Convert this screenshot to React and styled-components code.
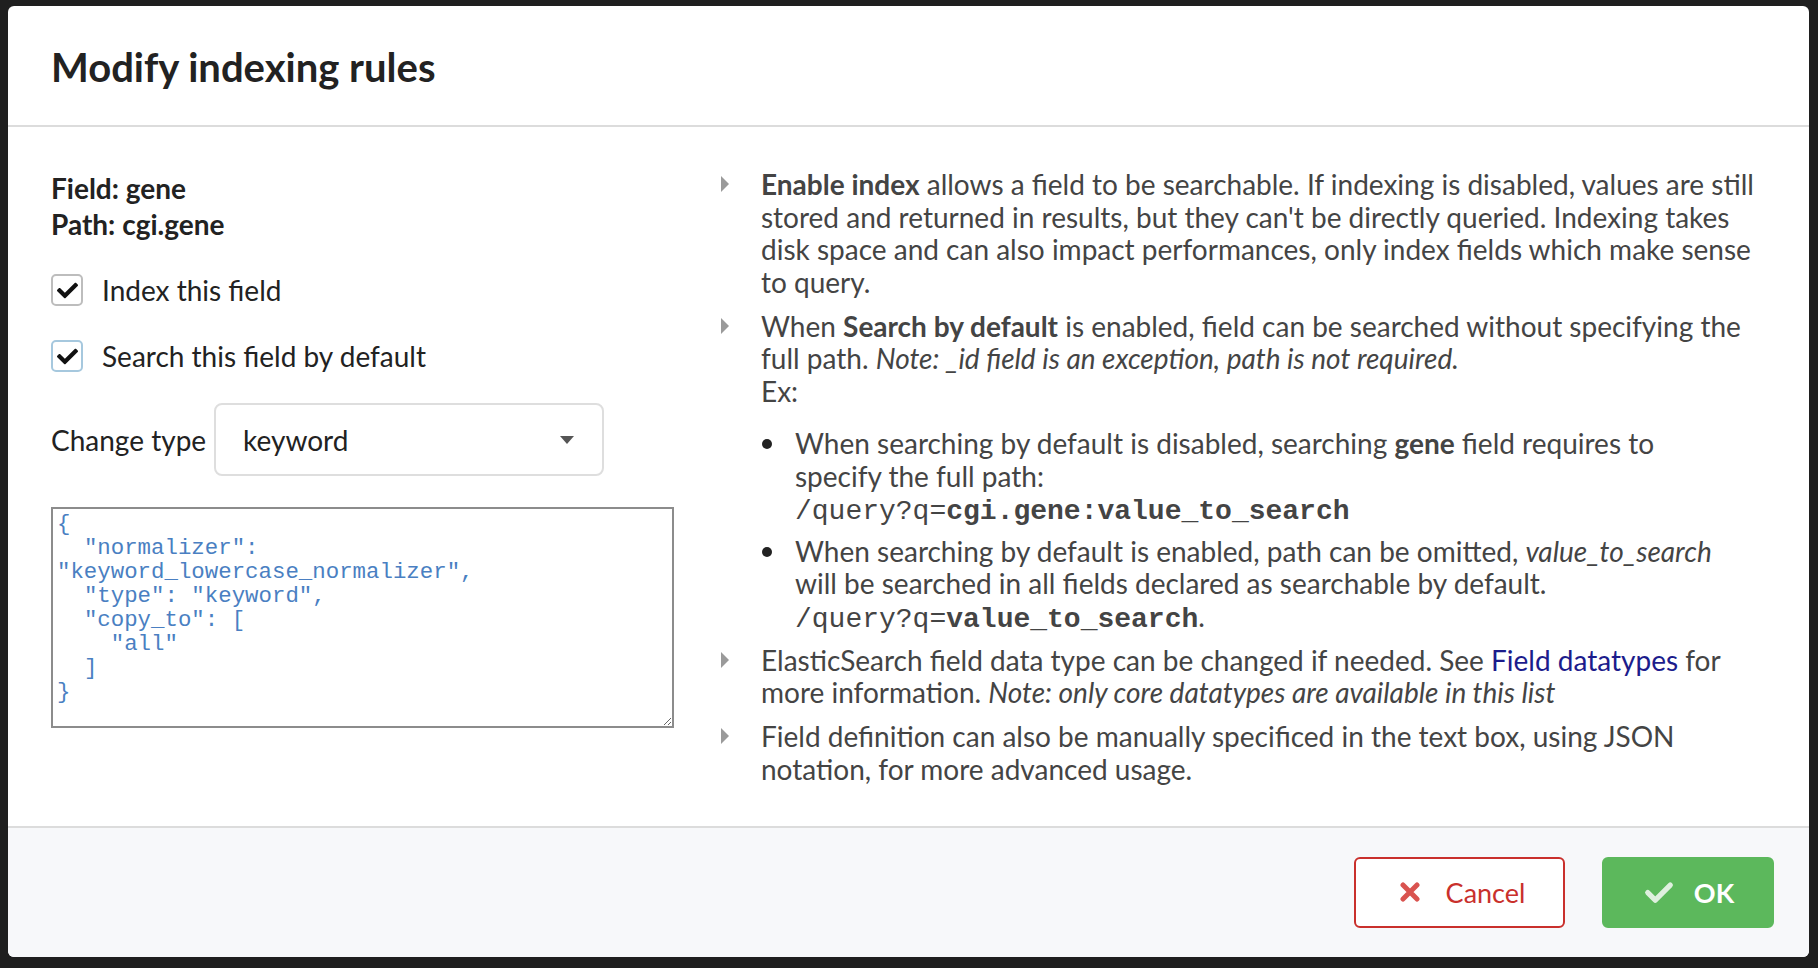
import React from 'react'
import styled, { createGlobalStyle } from 'styled-components'
import { FaCheck } from 'react-icons/fa'

const GlobalStyle = createGlobalStyle`
   html, body {
      margin: 0;
      padding: 0;
      background: #1f1f1f;
      font-family: Lato, "Open Sans", sans-serif;
   }
`

const Backdrop = styled.div`
   width: 1818px;
   height: 968px;
   padding: 6px 0 0 8px;
   box-sizing: border-box;
`

const Modal = styled.div`
   width: 1801px;
   height: 951px;
   background: #fff;
   border-radius: 6px;
   display: flex;
   flex-direction: column;
   overflow: hidden;
`

const Header = styled.div`
   height: 119px;
   flex-shrink: 0;
   display: flex;
   align-items: center;
   padding: 0 43px;
   border-bottom: 2px solid #dcdcdc;
`

const Title = styled.h1`
   margin: 0;
   font-size: 40px;
   font-weight: 700;
   color: #222;
   padding-top: 2px;
`

const Body = styled.div`
   flex: 1;
   display: grid;
   grid-template-columns: 623px 1fr;
   column-gap: 46px;
   padding: 41px 46px 0 43px;
`

const LeftCol = styled.div`
   display: flex;
   flex-direction: column;
   color: #222;
   font-size: 28px;
`

const Info = styled.div`
   font-weight: 700;
   line-height: 36px;
   margin-top: 2px;
`

const CheckRow = styled.label`
   display: flex;
   align-items: center;
   gap: 19px;
   margin-top: ${p => p.first ? '32px' : '34px'};
   line-height: 32px;
`

const Box = styled.span`
   width: 28px;
   height: 28px;
   border: 2px solid ${p => p.focused ? '#a6c8de' : '#bdbdbd'};
   border-radius: 5px;
   display: flex;
   align-items: center;
   justify-content: center;
   background: #fff;
   color: #111;
   font-size: 21px;
`

const TypeRow = styled.div`
   display: flex;
   align-items: center;
   gap: 8px;
   margin-top: 31px;
`

const Select = styled.div`
   width: 390px;
   height: 73px;
   box-sizing: border-box;
   border: 2px solid #dedede;
   border-radius: 8px;
   display: flex;
   align-items: center;
   justify-content: space-between;
   padding: 0 28px 0 27px;
`

const JsonArea = styled.textarea`
   margin-top: 31px;
   width: 623px;
   height: 221px;
   box-sizing: border-box;
   border: 2px solid #8c8c8c;
   padding: 3px 4px;
   font-family: "Liberation Mono", "Courier New", monospace;
   font-size: 22.4px;
   line-height: 24px;
   color: #4a7fc2;
   resize: vertical;
   outline: none;
`

const HelpList = styled.ul`
   list-style: none;
   margin: 0;
   padding: 0;
   color: #444;
   font-size: 28px;
   line-height: 32.5px;
`

const HelpItem = styled.li`
   display: flex;
   gap: 31px;
   margin-bottom: 11.5px;
`

const Caret = styled.span`
   flex-shrink: 0;
   width: 10px;
   height: 32.5px;
   display: flex;
   align-items: center;
`

const SubList = styled.ul`
   margin: 20px 0 0 0;
   padding: 0 32px 0 0;
   list-style: none;
   display: flex;
   flex-direction: column;
   gap: 10px;
`

const SubItem = styled.li`
   display: flex;
   gap: 23px;
`

const Dot = styled.span`
   flex-shrink: 0;
   width: 10px;
   height: 10px;
   border-radius: 50%;
   background: #222;
   margin: 12px 0 0 1px;
`

const Code = styled.code`
   font-family: "Liberation Mono", "Courier New", monospace;
   font-size: 28px;
   line-height: 20px;
   color: #444;
`

const Link = styled.a`
   color: #1c1c8c;
   text-decoration: none;
`

const Footer = styled.div`
   height: 128px;
   flex-shrink: 0;
   background: #f7f8fa;
   border-top: 2px solid #dcdcdc;
   display: flex;
   align-items: center;
   justify-content: flex-end;
   gap: 37px;
   padding: 0 35px 1px 0;
`

const Button = styled.button`
   height: 71px;
   width: ${p => p.w}px;
   border-radius: 6px;
   border: 2px solid ${p => p.primary ? '#5cb85c' : '#c9302c'};
   background: ${p => p.primary ? '#5cb85c' : '#fff'};
   color: ${p => p.primary ? '#fff' : '#c9302c'};
   font-family: Lato, sans-serif;
   font-size: 27px;
   font-weight: ${p => p.primary ? 700 : 400};
   display: flex;
   align-items: center;
   justify-content: center;
   gap: ${p => p.primary ? '20px' : '26px'};
   padding-right: ${p => p.primary ? '4px' : '0'};
   cursor: pointer;
`

const CaretIcon = () => (
   <svg width="10" height="16" viewBox="0 0 10 16">
      <path d="M1 0 L9 8 L1 16 Z" fill="#9a9a9a" />
   </svg>
)

const CheckMark = ({ color = '#111', size = 22 }) => (
   <svg width={size} height={size} viewBox="0 0 24 24">
      <path d="M3 12.5 L9 18.5 L21 6.5" fill="none" stroke={color} strokeWidth="4.2" strokeLinecap="round" strokeLinejoin="round" />
   </svg>
)

const App = () => {
   const json = `{
  "normalizer": "keyword_lowercase_normalizer",
  "type": "keyword",
  "copy_to": [
    "all"
  ]
}`
   return (
      <Backdrop>
         <GlobalStyle />
         <Modal>
            <Header>
               <Title>Modify indexing rules</Title>
            </Header>
            <Body>
               <LeftCol>
                  <Info>Field: gene<br />Path: cgi.gene</Info>
                  <CheckRow first>
                     <Box><FaCheck /></Box>
                     Index this field
                  </CheckRow>
                  <CheckRow>
                     <Box focused><FaCheck /></Box>
                     Search this field by default
                  </CheckRow>
                  <TypeRow>
                     <span>Change type</span>
                     <Select>
                        <span>keyword</span>
                        <svg width="14" height="8" viewBox="0 0 14 8">
                           <path d="M0 0 H14 L7 8 Z" fill="#555" />
                        </svg>
                     </Select>
                  </TypeRow>
                  <JsonArea defaultValue={json} spellCheck={false} />
               </LeftCol>
               <HelpList>
                  <HelpItem>
                     <Caret><CaretIcon /></Caret>
                     <div>
                        <b>Enable index</b> allows a field to be searchable. If indexing is disabled, values are still stored and returned in results, but they can't be directly queried. Indexing takes disk space and can also impact performances, only index fields which make sense to query.
                     </div>
                  </HelpItem>
                  <HelpItem>
                     <Caret><CaretIcon /></Caret>
                     <div>
                        When <b>Search by default</b> is enabled, field can be searched without specifying the full path. <i>Note: _id field is an exception, path is not required.</i>
                        <br />Ex:
                        <SubList>
                           <SubItem>
                              <Dot />
                              <div>
                                 When searching by default is disabled, searching <b>gene</b> field requires to specify the full path:
                                 <br /><Code>/query?q=<b>cgi.gene:value_to_search</b></Code>
                              </div>
                           </SubItem>
                           <SubItem>
                              <Dot />
                              <div>
                                 When searching by default is enabled, path can be omitted, <i>value_to_search</i> will be searched in all fields declared as searchable by default.
                                 <br /><Code>/query?q=<b>value_to_search</b></Code>.
                              </div>
                           </SubItem>
                        </SubList>
                     </div>
                  </HelpItem>
                  <HelpItem>
                     <Caret><CaretIcon /></Caret>
                     <div>
                        ElasticSearch field data type can be changed if needed. See <Link href="#">Field datatypes</Link> for more information. <i>Note: only core datatypes are available in this list</i>
                     </div>
                  </HelpItem>
                  <HelpItem>
                     <Caret><CaretIcon /></Caret>
                     <div>
                        Field definition can also be manually specificed in the text box, using JSON notation, for more advanced usage.
                     </div>
                  </HelpItem>
               </HelpList>
            </Body>
            <Footer>
               <Button w={211}>
                  <svg width="20" height="20" viewBox="0 0 20 20">
                     <path d="M3 3 L17 17 M17 3 L3 17" stroke="#d9534f" strokeWidth="5" strokeLinecap="round" />
                  </svg>
                  Cancel
               </Button>
               <Button primary w={172}>
                  <CheckMark color="#dff0df" size={30} />
                  OK
               </Button>
            </Footer>
         </Modal>
      </Backdrop>
   )
}

export default App
